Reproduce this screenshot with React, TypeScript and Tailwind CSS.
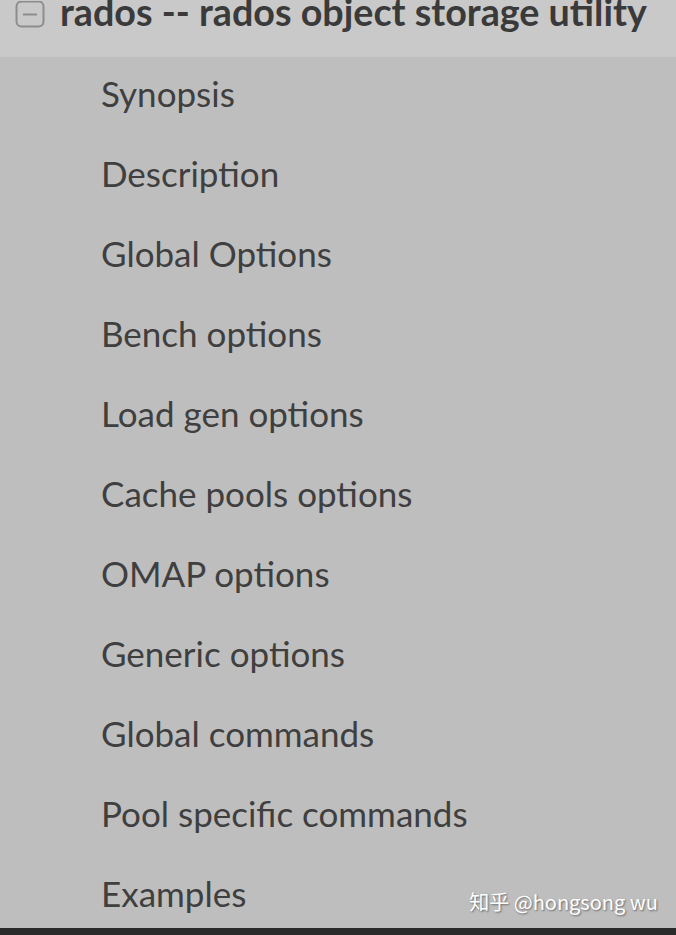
import React from 'react';

const sections = [
  'Synopsis',
  'Description',
  'Global Options',
  'Bench options',
  'Load gen options',
  'Cache pools options',
  'OMAP options',
  'Generic options',
  'Global commands',
  'Pool specific commands',
  'Examples',
];

export default function App() {
  return (
    <div className="w-[676px] h-[935px] flex flex-col bg-[#bebebe] font-['Lato',sans-serif] overflow-hidden">
      {/* Header row */}
      <div className="h-[57px] shrink-0 bg-[#c9c9c9] flex items-start">
        <svg width="32" height="30" viewBox="0 0 32 30" className="ml-[14px] mt-[1px] shrink-0">
          <rect x="2.5" y="0.5" width="27" height="25" rx="5" fill="none" stroke="#8d8d8d" strokeWidth="2" />
          <line x1="9" y1="13.5" x2="23" y2="13.5" stroke="#8d8d8d" strokeWidth="2" />
        </svg>
        <h1 className="ml-[14px] -mt-[13px] text-[37.7px] font-bold text-[#3a3a3a] whitespace-nowrap leading-[50px]">
          rados -- rados object storage utility
        </h1>
      </div>

      {/* Section list */}
      <ul className="flex-1 min-h-0 -mt-[4px] pl-[101px] overflow-hidden">
        {sections.map((s) => (
          <li key={s} className="h-[80px] text-[35px] leading-[80px] text-[#3f3f3f] whitespace-nowrap">
            {s}
          </li>
        ))}
      </ul>

      <div className="h-[7px] shrink-0 bg-[#2a2a2a] relative">
        <span className="absolute right-[18px] bottom-[18px] text-[20px] text-white font-['Noto_Sans_CJK_SC',sans-serif] whitespace-nowrap [text-shadow:1px_1px_2px_rgba(0,0,0,0.45)]">
          知乎 @hongsong wu
        </span>
      </div>
    </div>
  );
}
